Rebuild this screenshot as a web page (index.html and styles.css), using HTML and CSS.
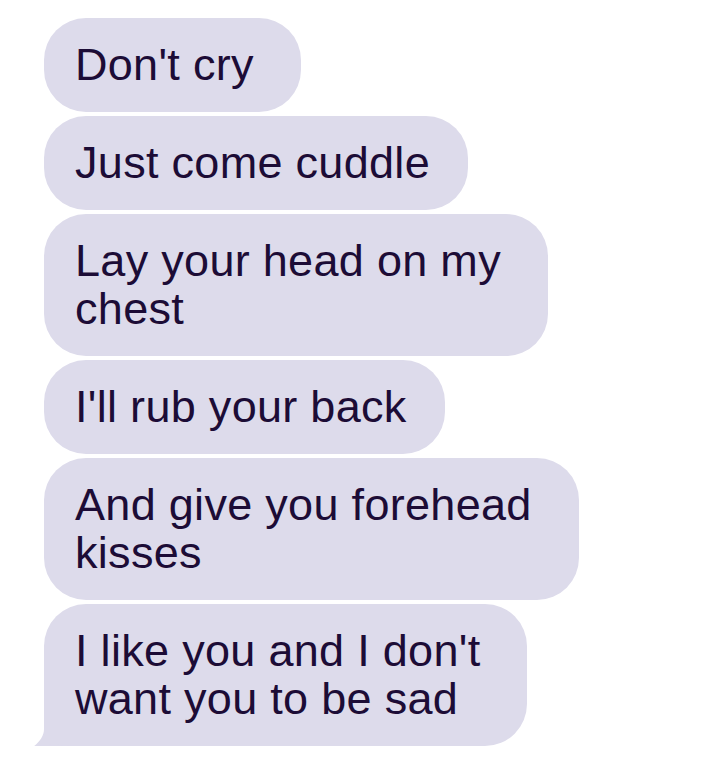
FILE: index.html
```html
<!DOCTYPE html>
<html lang="en">
<head>
<meta charset="utf-8">
<title>Messages</title>
<link rel="stylesheet" href="styles.css">
</head>
<body>
<div class="thread">
  <div class="bubble wide">Don't cry</div>
  <div class="bubble">Just come cuddle</div>
  <div class="bubble wide">Lay your head on my<br>chest</div>
  <div class="bubble">I'll rub your back</div>
  <div class="bubble wide">And give you forehead<br>kisses</div>
  <div class="bubble wide last">I like you and I don't<br>want you to be sad
    <svg class="tail" viewBox="0 0 40 30" width="40" height="30" aria-hidden="true">
      <path d="M14 0 L14 10 C14 18 8 25 0 30 C10 30 18 27 24 24 C28 26 34 27 40 27 L40 0 Z"/>
    </svg>
  </div>
</div>
</body>
</html>
```

FILE: styles.css
```css
html, body {
  margin: 0;
  padding: 0;
  background: #ffffff;
}

.thread {
  display: flex;
  flex-direction: column;
  align-items: flex-start;
  gap: 4px;
  padding: 18px 0 0 44px;
}

.bubble {
  position: relative;
  background: #dddbeb;
  color: #1c0c36;
  font-family: "Liberation Sans", Arial, sans-serif;
  font-size: 45px;
  line-height: 48px;
  letter-spacing: 0.3px;
  padding: 23px 38px 23px 31px;
  border-radius: 42px;
  white-space: nowrap;
}

.bubble.wide {
  padding-right: 47px;
}

.bubble.last {
  border-bottom-left-radius: 0;
}

.tail {
  position: absolute;
  left: -14px;
  bottom: -3px;
  fill: #dddbeb;
}
```
